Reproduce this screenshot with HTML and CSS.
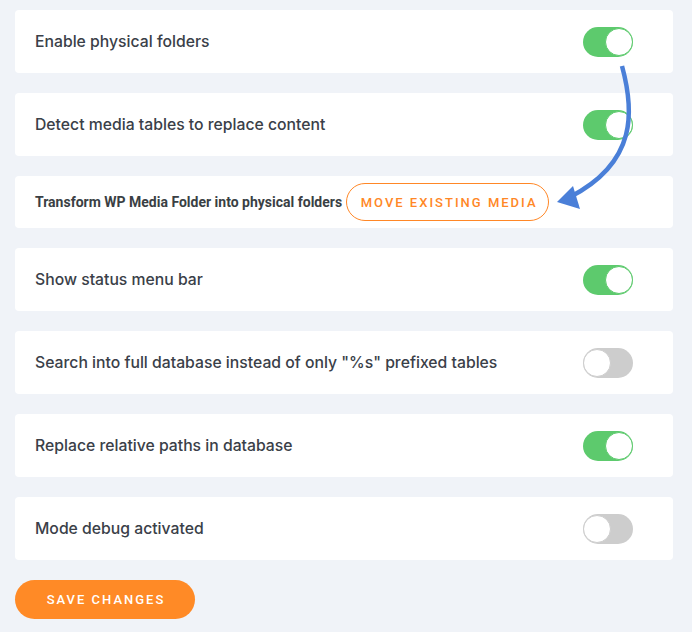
FILE: index.html
```html
<!DOCTYPE html>
<html>
<head>
<meta charset="utf-8">
<link rel="stylesheet" href="styles.css">
</head>
<body>
<div class="page">
  <div class="list">
    <div class="card">
      <span class="label">Enable physical folders</span>
      <span class="toggle on"><span class="knob"></span></span>
    </div>
    <div class="card">
      <span class="label">Detect media tables to replace content</span>
      <span class="toggle on"><span class="knob"></span></span>
    </div>
    <div class="card short">
      <span class="label bold">Transform WP Media Folder into physical folders</span>
      <button class="btn-outline">MOVE EXISTING MEDIA</button>
    </div>
    <div class="card">
      <span class="label">Show status menu bar</span>
      <span class="toggle on"><span class="knob"></span></span>
    </div>
    <div class="card">
      <span class="label">Search into full database instead of only "%s" prefixed tables</span>
      <span class="toggle off"><span class="knob"></span></span>
    </div>
    <div class="card">
      <span class="label">Replace relative paths in database</span>
      <span class="toggle on"><span class="knob"></span></span>
    </div>
    <div class="card">
      <span class="label">Mode debug activated</span>
      <span class="toggle off"><span class="knob"></span></span>
    </div>
  </div>
  <button class="btn-save">SAVE CHANGES</button>
  <svg class="arrow" width="692" height="632" viewBox="0 0 692 632">
    <path d="M622 66 C 634 110, 638 162, 570 197" fill="none" stroke="#4a7fd8" stroke-width="4.5" stroke-linecap="butt"/>
    <polygon points="557,202 573,186 580,209" fill="#4a7fd8"/>
  </svg>
</div>
</body>
</html>
```

FILE: styles.css
```css
html, body {
  margin: 0;
  padding: 0;
}
body {
  background: #f0f3f8;
  font-family: Inter, "Noto Sans", sans-serif;
  width: 692px;
  height: 632px;
  overflow: hidden;
}
.page {
  position: relative;
  padding: 10px 19px 0 15px;
}
.list {
  display: flex;
  flex-direction: column;
  gap: 20px;
}
.card {
  background: #fff;
  border-radius: 4px;
  height: 63px;
  box-sizing: border-box;
  padding: 0 40px 1px 20px;
  display: flex;
  align-items: center;
  justify-content: space-between;
}
.card.short {
  height: 52px;
  padding-bottom: 0;
  justify-content: flex-start;
  gap: 4px;
}
.label {
  font-size: 15.75px;
  font-weight: 500;
  color: #3a4048;
}
.label.bold {
  font-family: Roboto, sans-serif;
  font-weight: 700;
  font-size: 14px;
  color: #3a3f44;
}
.toggle {
  width: 50px;
  height: 30px;
  border-radius: 15px;
  box-sizing: border-box;
  display: flex;
  align-items: center;
  margin-top: 1px;
}
.toggle.on {
  background: #5dca6d;
  justify-content: flex-end;
}
.toggle.off {
  background: #cdcdcd;
  justify-content: flex-start;
}
.knob {
  width: 28px;
  height: 28px;
  border-radius: 50%;
  background: #fff;
  box-sizing: border-box;
}
.toggle.on .knob {
  border: 1.5px solid #5dca6d;
}
.toggle.off .knob {
  border: 1.5px solid #cdcdcd;
}
.btn-outline {
  height: 38px;
  width: 203px;
  padding: 0;
  white-space: nowrap;
  border: 1px solid #ff8726;
  border-radius: 19px;
  background: #fff;
  color: #ff8726;
  font-family: Roboto, sans-serif;
  font-size: 13px;
  font-weight: 500;
  letter-spacing: 2px;
  text-indent: 3px;
}
.btn-save {
  margin-top: 20px;
  width: 180px;
  height: 39px;
  border: none;
  border-radius: 20px;
  background: #ff8a26;
  color: #fff;
  font-family: Roboto, sans-serif;
  font-size: 13px;
  font-weight: 500;
  letter-spacing: 2px;
  text-indent: 2px;
  white-space: nowrap;
  display: block;
}
.arrow {
  position: absolute;
  left: 0;
  top: 0;
  pointer-events: none;
}
```
